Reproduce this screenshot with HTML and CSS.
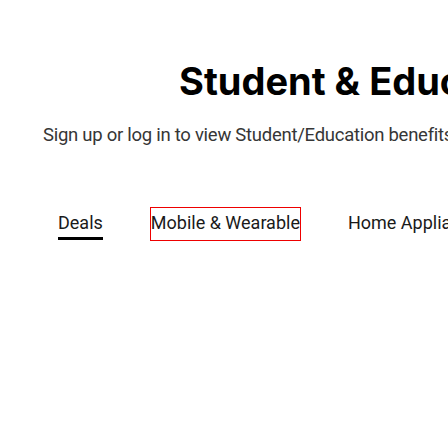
FILE: index.html
```html
<!DOCTYPE html>
<html>
<head>
<meta charset="utf-8">
<link rel="stylesheet" href="styles.css">
</head>
<body>
<main class="page">
  <h1 class="title">Student &amp; Education Offers</h1>
  <p class="subtitle">Sign up or log in to view Student/Education benefits</p>
  <nav class="tabs">
    <span class="tab active">Deals</span>
    <span class="tab focused">Mobile &amp; Wearable</span>
    <span class="tab">Home Appliances</span>
    <span class="tab">TV &amp; Audio</span>
  </nav>
</main>
</body>
</html>
```
FILE: styles.css
```css
html, body {
  margin: 0;
  padding: 0;
  background: #fff;
  width: 448px;
  height: 448px;
  overflow: hidden;
}
.page {
  display: flex;
  flex-direction: column;
  white-space: nowrap;
}
.title {
  margin: 58px 0 0 179px;
  font-family: Inter, "Noto Sans", sans-serif;
  font-weight: 700;
  font-size: 38px;
  line-height: 46px;
  color: #000;
}
.subtitle {
  margin: 17px 0 0 43px;
  font-family: Roboto, sans-serif;
  font-weight: 400;
  font-size: 18.5px;
  line-height: 28px;
  letter-spacing: -0.27px;
  color: #363636;
}
.tabs {
  display: flex;
  gap: 48px;
  margin: 59px 0 0 58px;
  font-family: Roboto, sans-serif;
  font-size: 18px;
  color: #1a1a1a;
}
.tab {
  line-height: 29px;
  border-bottom: 3px solid transparent;
}
.tab.active {
  border-bottom-color: #000;
}
.tab.focused {
  outline: 1px solid #e00;
}
```
